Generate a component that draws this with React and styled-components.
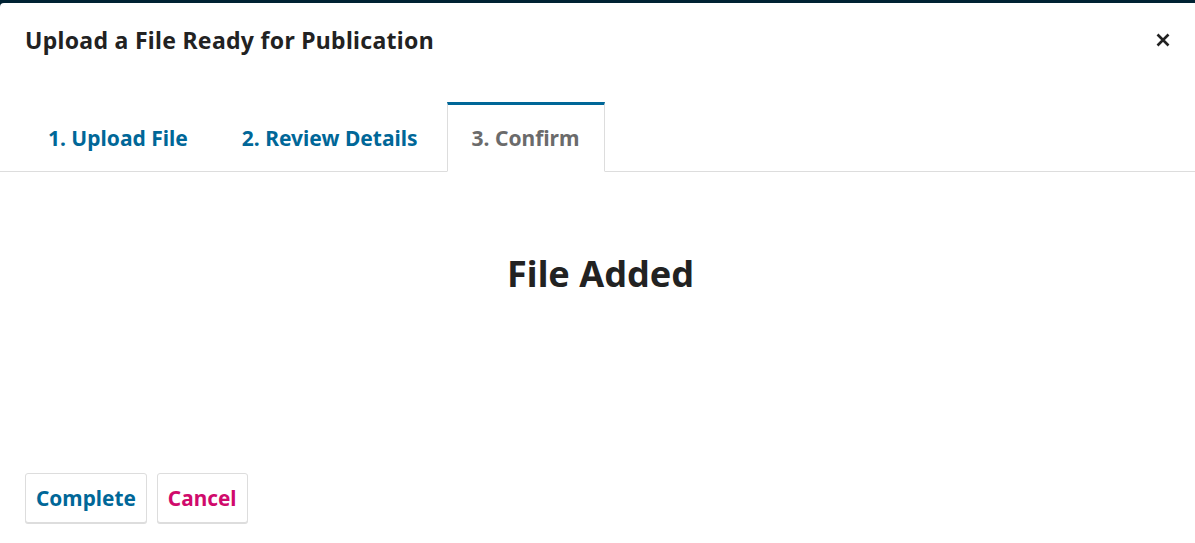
import styled, { createGlobalStyle } from "styled-components";

const GlobalStyle = createGlobalStyle`
  html, body {
    margin: 0;
    padding: 0;
    background: #002233;
    font-family: "Noto Sans", "Open Sans", sans-serif;
  }
  #root {
    padding-top: 3px;
  }
`;

const Modal = styled.div`
  background: #fff;
  border-radius: 4px 0 0 0;
  height: 540px;
  display: flex;
  flex-direction: column;
`;

const Header = styled.div`
  display: flex;
  align-items: center;
  justify-content: space-between;
  height: 73px;
  padding: 0 25px;
`;

const Title = styled.h2`
  margin: 0;
  font-size: 23px;
  letter-spacing: 0.3px;
  font-weight: 700;
  color: #222;
`;

const CloseButton = styled.button`
  border: none;
  background: none;
  padding: 0;
  width: 14px;
  height: 14px;
  display: flex;
  align-items: center;
  justify-content: center;
  cursor: pointer;
`;

const Tabs = styled.div`
  display: flex;
  margin-top: 26px;
  padding-left: 23px;
  gap: 4px;
  border-bottom: 1px solid #ddd;
`;

const Tab = styled.button`
  height: 70px;
  padding: 0 24px;
  margin-bottom: -1px;
  font-family: inherit;
  font-size: 21px;
  font-weight: 700;
  background: ${(p) => (p.$active ? "#fff" : "transparent")};
  border: 1px solid ${(p) => (p.$active ? "#ddd" : "transparent")};
  border-top: 3px solid ${(p) => (p.$active ? "#006798" : "transparent")};
  border-bottom: 1px solid ${(p) => (p.$active ? "#fff" : "transparent")};
  color: ${(p) => (p.$active ? "#6b6b6b" : "#006798")};
`;

const Body = styled.div`
  flex: 1;
  display: flex;
  justify-content: center;
  padding: 77px 0 0 6px;
`;

const Heading = styled.h1`
  margin: 0;
  font-size: 36px;
  font-weight: 700;
  color: #222;
`;

const Footer = styled.div`
  display: flex;
  gap: 10px;
  padding: 0 25px 20px;
`;

const Button = styled.button`
  height: 50px;
  padding: 0 10px;
  font-family: inherit;
  font-size: 20.8px;
  font-weight: 700;
  background: #fff;
  border: 1px solid #ddd;
  border-radius: 3px;
  box-shadow: 0 1px 0 #ddd;
  color: ${(p) => (p.$danger ? "#d00a6c" : "#006798")};
`;

export default function App() {
  return (
    <>
      <GlobalStyle />
      <Modal>
        <Header>
          <Title>Upload a File Ready for Publication</Title>
          <CloseButton aria-label="Close">
            <svg width="14" height="14" viewBox="0 0 14 14">
              <path d="M1.5 1.5 L12.5 12.5 M12.5 1.5 L1.5 12.5" stroke="#222" strokeWidth="2.6" />
            </svg>
          </CloseButton>
        </Header>
        <Tabs>
          <Tab>1. Upload File</Tab>
          <Tab>2. Review Details</Tab>
          <Tab $active>3. Confirm</Tab>
        </Tabs>
        <Body>
          <Heading>File Added</Heading>
        </Body>
        <Footer>
          <Button>Complete</Button>
          <Button $danger>Cancel</Button>
        </Footer>
      </Modal>
    </>
  );
}
